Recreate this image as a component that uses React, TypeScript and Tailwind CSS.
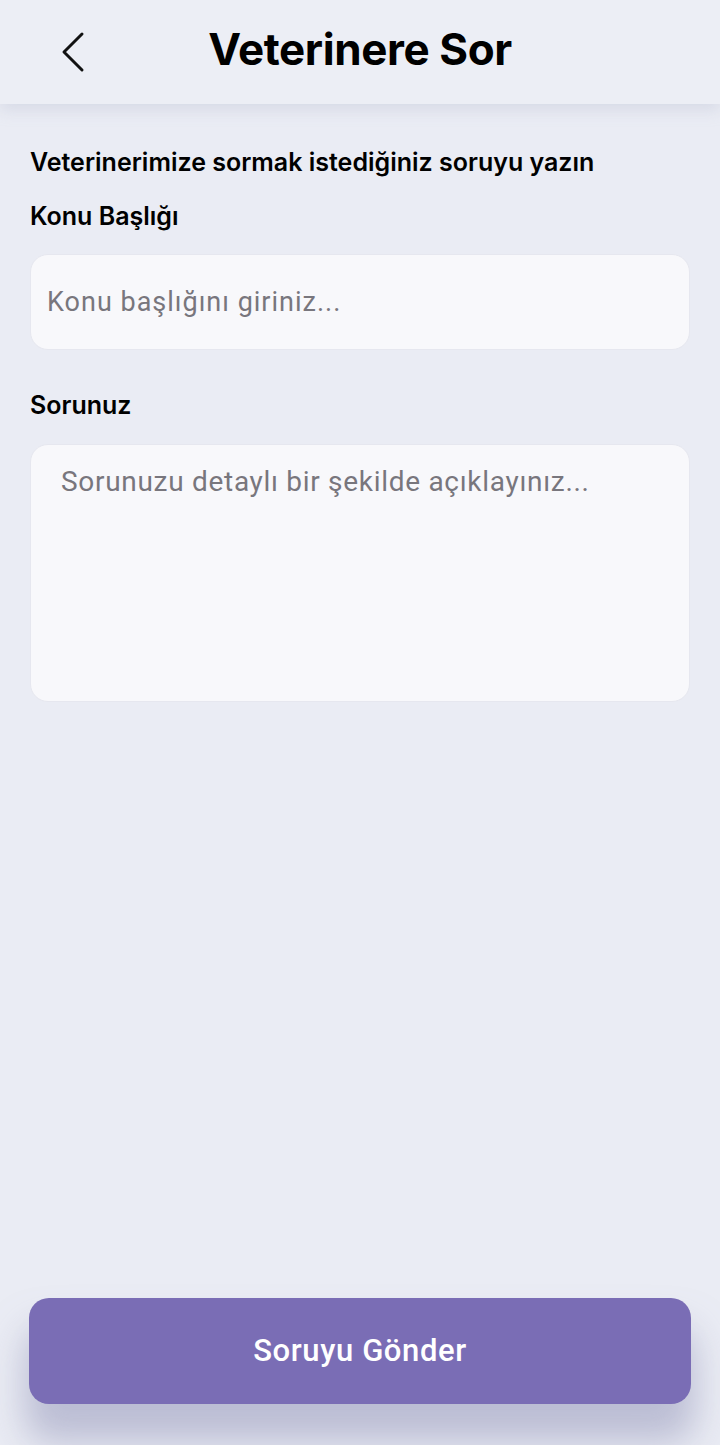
import React from "react";

export default function App() {
  return (
    <div className="min-h-[1445px] flex flex-col bg-[#eaecf4] font-['Inter',sans-serif] text-black">
      {/* Header */}
      <header className="h-[104px] grid grid-cols-[1fr_auto_1fr] items-center bg-[#eceef5] shadow-[0_6px_14px_rgba(180,185,205,0.35)] relative z-10">
        <div className="pl-[60px]">
          <svg width="26" height="42" viewBox="0 0 26 42" fill="none">
            <path d="M22 3 L4 21 L22 39" stroke="#111" strokeWidth="3" strokeLinecap="round" strokeLinejoin="round" />
          </svg>
        </div>
        <h1 className="text-[44px] font-bold tracking-[-0.4px] leading-none pb-[6px]">Veterinere Sor</h1>
        <div />
      </header>

      {/* Form */}
      <main className="flex-1 flex flex-col px-[30px] pt-[42px]">
        <p className="text-[25px] font-semibold leading-[32px]">Veterinerimize sormak istediğiniz soruyu yazın</p>
        <label className="text-[25px] font-semibold leading-[32px] mt-[22px]">Konu Başlığı</label>
        <input
          placeholder="Konu başlığını giriniz..."
          className="mt-[22px] h-[96px] rounded-[18px] bg-[#f8f8fb] border border-[#e6e7ef] px-[16px] text-[27px] tracking-[1px] font-['Roboto',sans-serif] text-[#333] placeholder:text-[#78767d] outline-none"
        />
        <label className="text-[25px] font-semibold leading-[32px] mt-[39px]">Sorunuz</label>
        <textarea
          placeholder="Sorunuzu detaylı bir şekilde açıklayınız..."
          className="mt-[23px] h-[258px] resize-none rounded-[18px] bg-[#f8f8fb] border border-[#e6e7ef] px-[30px] pt-[18px] text-[28px] tracking-[0.7px] leading-[38px] font-['Roboto',sans-serif] text-[#333] placeholder:text-[#78767d] outline-none"
        />
      </main>

      {/* Footer */}
      <footer className="px-[29px] pb-[41px]">
        <button className="w-full h-[106px] rounded-[20px] bg-[#7a6db5] text-white text-[31px] font-medium tracking-[0.6px] font-['Roboto',sans-serif] shadow-[0_34px_36px_4px_rgba(150,152,185,0.55)]">
          Soruyu Gönder
        </button>
      </footer>
    </div>
  );
}
